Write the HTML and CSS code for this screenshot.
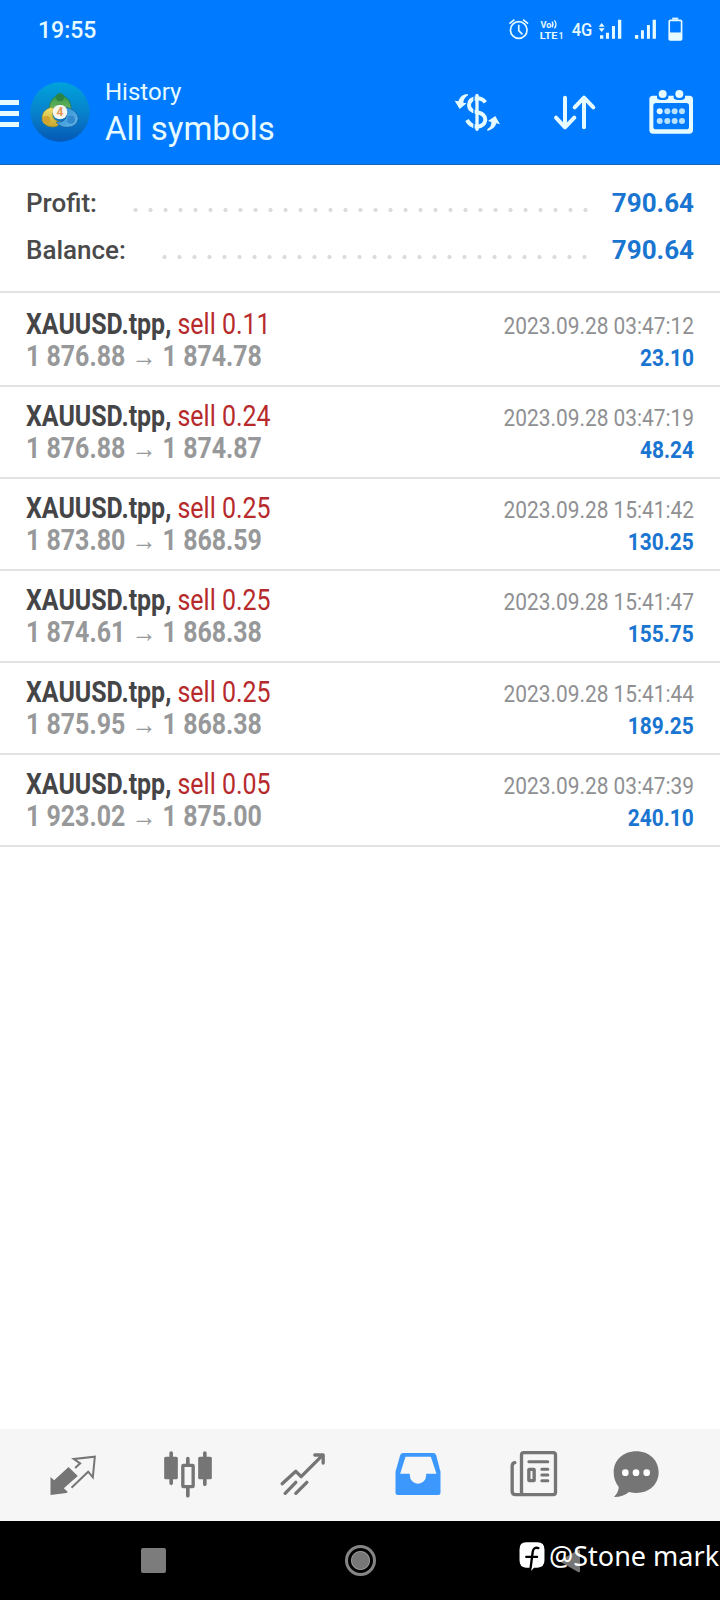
FILE: index.html
```html
<!DOCTYPE html>
<html lang="en">
<head>
<meta charset="utf-8">
<title>History</title>
<link rel="stylesheet" href="styles.css">
</head>
<body>
<div class="screen">
  <header class="header">
    <div class="status">
      <span class="clock">19:55</span>
      <svg class="status-icons" viewBox="180 40 570 100" fill="none" stroke="#e6fbff">
        <circle cx="236" cy="91" r="25" stroke-width="5"/>
        <path d="M236 75v18l11 11" stroke-width="5"/>
        <path d="M208 72l15-12M264 72l-15-12" stroke-width="5"/>
        <g fill="#e6fbff" stroke="none" font-family="Roboto, sans-serif">
          <text x="301" y="85" font-size="27" font-weight="700" textLength="33" lengthAdjust="spacingAndGlyphs">Vo</text>
          <text x="299" y="117" font-size="30" font-weight="700" textLength="53" lengthAdjust="spacingAndGlyphs">LTE</text>
          <text x="356" y="117" font-size="28" font-weight="700" textLength="14" lengthAdjust="spacingAndGlyphs">1</text>
          <text x="395" y="109" font-size="56" font-weight="500" textLength="62" lengthAdjust="spacingAndGlyphs">4G</text>
          <path d="M485 70l9 11h-18zM485 97l-9-11h18z"/>
          <path d="M480 107h10v10h-10zM498 99h9v18h-9zM516 79h9v38h-9zM534 60h10v57h-10z"/>
          <path d="M585 106h10v11h-10zM603 92h9v25h-9zM621 76h9v41h-9zM638 60h10v57h-10z"/>
        </g>
        <path d="M336 66q6 8 0 17M343 62q10 12 0 24" stroke-width="4"/>
        <rect x="688" y="62" width="37" height="59" rx="3" stroke-width="5"/>
        <path d="M697 57h18" stroke-width="6"/>
        <path d="M688 99h37v22h-37z" fill="#e6fbff"/>
      </svg>
    </div>
    <div class="toolbar">
      <div class="menu"><i></i><i></i><i></i></div>
      <svg class="logo" viewBox="0 0 180 180">
        <defs>
          <linearGradient id="disc" x1="0" y1="0" x2="0" y2="1"><stop offset="0" stop-color="#00a3dc"/><stop offset=".55" stop-color="#087fca"/><stop offset="1" stop-color="#0558b4"/></linearGradient>
          <linearGradient id="green" x1="0" y1="0" x2="0" y2="1"><stop offset="0" stop-color="#2f9a4c"/><stop offset="1" stop-color="#83bd62"/></linearGradient>
          <linearGradient id="gold" x1="0" y1="0" x2="0" y2="1"><stop offset="0" stop-color="#ece26c"/><stop offset="1" stop-color="#c9a52c"/></linearGradient>
          <linearGradient id="blue" x1="0" y1="0" x2="1" y2="1"><stop offset="0" stop-color="#2388cd"/><stop offset="1" stop-color="#68b8ea"/></linearGradient>
        </defs>
        <circle cx="90" cy="90" r="89" fill="url(#disc)"/>
        <path d="M58 82Q58 44 90 40q34 4 34 46l-16 8q-2-24-18-26-18 2-20 26z" fill="url(#green)" stroke="#1b6e45" stroke-width="2"/>
        <path d="M62 76q-26 10-26 32 4 26 32 27 18 0 24-16-22-2-24-20 0-12 8-18z" fill="url(#gold)" stroke="#8a8a2c" stroke-width="2"/>
        <path d="M110 76q32 8 35 34-4 24-34 26-22 0-32-16 26 2 30-18 4-14-6-22z" fill="url(#blue)" stroke="#14579c" stroke-width="2"/>
        <circle cx="90" cy="46" r="12" fill="#2d8346"/>
        <circle cx="49" cy="114" r="12" fill="#d3a32f"/>
        <circle cx="123" cy="113" r="12" fill="#3289ce"/>
        <circle cx="90" cy="90" r="22" fill="#f5f6ee"/>
        <text x="90" y="103" text-anchor="middle" font-family="Roboto, sans-serif" font-size="36" font-weight="700" fill="#e79554">4</text>
      </svg>
      <div class="titles">
        <div class="subtitle">History</div>
        <div class="title">All symbols</div>
      </div>
      <div class="actions">
        <svg viewBox="22 249 180 180" fill="none" stroke="#e6fbff">
          <path d="M137 307Q128 295 112 295 88 296 88 316 89 332 112 337 137 341 137 360 134 379 112 380 91 378 82 360" stroke-width="12"/>
          <path d="M98 285V390" stroke="#007aff" stroke-width="0"/>
          <path d="M112 286V388" stroke-width="10" stroke-linecap="round"/>
          <path d="M103 290V385" stroke="#007aff" stroke-width="4"/>
          <path d="M85 282Q63 282 56 304L45 302 60 327 81 310 71 308Q72 294 85 286zM143 393Q165 388 170 370L181 373 167 348 145 363 155 366Q156 381 143 387z" fill="#e6fbff" stroke="none"/>
        </svg>
        <svg viewBox="312 249 180 180" fill="none" stroke="#e6fbff" stroke-width="12" stroke-linecap="round" stroke-linejoin="round">
          <path d="M375 293V381M348 353L375 382 403 353M432 382V294M404 322L432 293 460 322"/>
        </svg>
        <svg viewBox="602 249 180 180" fill="#e6fbff">
          <rect x="627" y="287" width="131" height="114" rx="11"/>
          <rect x="639" y="309" width="107" height="79" rx="8" fill="#007aff"/>
          <path d="M650 285h34v9q-3 6-17 6t-17-6zM700 285h34v9q-3 6-17 6t-17-6z" fill="#007aff"/>
          <circle cx="667" cy="282" r="12"/><circle cx="717" cy="282" r="12"/>
          <circle cx="658" cy="334" r="9"/><g opacity=".8"><circle cx="681" cy="334" r="9"/><circle cx="703" cy="334" r="9"/><circle cx="725" cy="334" r="9"/>
          <circle cx="658" cy="363" r="9"/><circle cx="681" cy="363" r="9"/><circle cx="703" cy="363" r="9"/><circle cx="725" cy="363" r="9"/></g>
        </svg>
      </div>
    </div>
  </header>

  <section class="summary">
    <div class="sum-row"><span class="sum-label">Profit:</span><span class="dots dots-profit"></span><span class="sum-value">790.64</span></div>
    <div class="sum-row"><span class="sum-label">Balance:</span><span class="dots dots-balance"></span><span class="sum-value">790.64</span></div>
  </section>

  <main class="deals">
    <article class="deal">
      <div class="line"><span class="symbol">XAUUSD.tpp, <span class="side">sell 0.11</span></span><span class="date">2023.09.28 03:47:12</span></div>
      <div class="line"><span class="prices">1 876.88 <span class="arrow">→</span> 1 874.78</span><span class="gain">23.10</span></div>
    </article>
    <article class="deal">
      <div class="line"><span class="symbol">XAUUSD.tpp, <span class="side">sell 0.24</span></span><span class="date">2023.09.28 03:47:19</span></div>
      <div class="line"><span class="prices">1 876.88 <span class="arrow">→</span> 1 874.87</span><span class="gain">48.24</span></div>
    </article>
    <article class="deal">
      <div class="line"><span class="symbol">XAUUSD.tpp, <span class="side">sell 0.25</span></span><span class="date">2023.09.28 15:41:42</span></div>
      <div class="line"><span class="prices">1 873.80 <span class="arrow">→</span> 1 868.59</span><span class="gain">130.25</span></div>
    </article>
    <article class="deal">
      <div class="line"><span class="symbol">XAUUSD.tpp, <span class="side">sell 0.25</span></span><span class="date">2023.09.28 15:41:47</span></div>
      <div class="line"><span class="prices">1 874.61 <span class="arrow">→</span> 1 868.38</span><span class="gain">155.75</span></div>
    </article>
    <article class="deal">
      <div class="line"><span class="symbol">XAUUSD.tpp, <span class="side">sell 0.25</span></span><span class="date">2023.09.28 15:41:44</span></div>
      <div class="line"><span class="prices">1 875.95 <span class="arrow">→</span> 1 868.38</span><span class="gain">189.25</span></div>
    </article>
    <article class="deal">
      <div class="line"><span class="symbol">XAUUSD.tpp, <span class="side">sell 0.05</span></span><span class="date">2023.09.28 03:47:39</span></div>
      <div class="line"><span class="prices">1 923.02 <span class="arrow">→</span> 1 875.00</span><span class="gain">240.10</span></div>
    </article>
  </main>

  <nav class="tabs">
    <a class="tab"><svg viewBox="127.5 75 180 180">
      <path d="M150 171L161 181 204 141 232 168 190 205 202 216 198 219 150 225z" fill="#757575"/>
      <path d="M224 144L239 130 220 117 283 110 277 172 263 155 213 203" fill="none" stroke="#757575" stroke-width="6"/>
    </svg></a>
    <a class="tab"><svg viewBox="472.5 75 180 180" fill="#757575">
      <rect x="491" y="110" width="41" height="68" rx="5"/><rect x="593" y="110" width="41" height="68" rx="5"/>
      <path d="M512 99V190M613 99V193M562 116V136M562 200V227" stroke="#757575" stroke-width="11" stroke-linecap="round"/>
      <rect x="547" y="136" width="31" height="64" rx="2" fill="#f6f6f6" stroke="#757575" stroke-width="10"/>
    </svg></a>
    <a class="tab"><svg viewBox="817.5 75 180 180" fill="none" stroke="#757575" stroke-width="10" stroke-linecap="round" stroke-linejoin="round">
      <path d="M845 191L886 154 902 170 965 107M854 220L886 187M886 220L919 187"/>
      <path d="M943 105H968V129"/>
    </svg></a>
    <a class="tab"><svg viewBox="82.5 75 180 180">
      <path d="M128 99H218Q225 99 227 106L240 155V218Q240 225 233 225H112Q105 225 105 218V155L119 106Q121 99 128 99z" fill="#3c98fd"/>
      <path d="M135 110H211L228 161H197V166A24 25 0 0 1 148 166V161H119z" fill="#f6f6f6"/>
    </svg></a>
    <a class="tab"><svg viewBox="427.5 75 180 180" fill="none" stroke="#757575" stroke-width="10" stroke-linecap="round">
      <rect x="483" y="98" width="102" height="126" rx="7"/>
      <path d="M463 128Q455 129 455 139V214Q455 224 465 224H486"/>
      <path d="M505 125H562M544 148H562M544 165H562M544 182H562" stroke-width="9"/>
      <rect x="505" y="148" width="16" height="34" stroke-width="10" rx="1"/>
    </svg></a>
    <a class="tab tab-last"><svg viewBox="738 75 180 180">
      <path d="M829 94C868 94 896 121 896 157 896 193 868 219 829 219Q819 219 807 216 790 231 762 231 777 215 776 200 761 183 761 157C761 121 789 94 829 94z" fill="#757575"/>
      <circle cx="796" cy="158" r="10" fill="#fff"/><circle cx="828" cy="158" r="10" fill="#fff"/><circle cx="860" cy="158" r="10" fill="#fff"/>
    </svg></a>
  </nav>

  <footer class="sysnav">
    <span class="recent"></span>
    <span class="home"></span>
    <svg class="back" viewBox="0 0 24 26"><path d="M2 13L21 2q2-1 2 1V23q0 2-2 1z" fill="#757575"/></svg>
    <div class="watermark">
      <svg viewBox="0 0 76 86">
        <path d="M20 1H54Q75 1 75 22V54Q75 75 54 76H44L36 85V76H20Q1 75 1 54V22Q1 1 20 1z" fill="#fff"/>
        <path d="M57 18Q42 14 40 30L34 76M21 44H53" fill="none" stroke="#000" stroke-width="7" stroke-linecap="round"/>
      </svg>
      <span>@Stone mark</span>
    </div>
  </footer>
</div>
</body>
</html>
```
FILE: styles.css
```css
* { box-sizing: border-box; }
body { margin: 0; background: #fff; font-family: Roboto, "Liberation Sans", sans-serif; }
svg { display: block; }
.screen { width: 720px; height: 1600px; display: flex; flex-direction: column; overflow: hidden; }

.header { height: 165px; background: #007aff; border-bottom: 1px solid #1767b4; color: #e6fbff; }
.status { height: 60px; padding: 0 30px 0 38px; display: flex; justify-content: space-between; align-items: center; }
.clock { font-size: 23px; font-weight: 500; line-height: 30px; padding-top: 2px; }
.status-icons { width: 190px; height: 33.3px; }
.toolbar { height: 104px; display: flex; align-items: flex-start; }
.menu { width: 19px; margin-top: 40px; display: flex; flex-direction: column; gap: 6px; }
.menu i { height: 5px; background: #e6fbff; }
.logo { width: 60px; height: 60px; margin: 22px 0 0 11px; }
.titles { width: 200px; margin: 16px 0 0 15px; }
.subtitle { font-size: 24px; line-height: 32px; }
.title { font-size: 33px; line-height: 42px; white-space: nowrap; }
.actions { margin: 23px 0 0 auto; padding-right: 19.3px; display: flex; gap: 36.7px; }
.actions svg { width: 60px; height: 60px; }

.summary { height: 128px; border-bottom: 2px solid #e2e2e2; padding: 15px 26px 0; }
.sum-row { height: 47px; display: flex; align-items: center; font-size: 26px; line-height: 47px; font-weight: 500; }
.sum-label { color: #4a4a4a; }
.sum-value { color: #1a75d1; font-weight: 700; margin-left: auto; }
.dots { height: 6px; margin-top: 12px; background: radial-gradient(circle at center, #dcdcdc 1.7px, transparent 2.5px) 0 0 / 15px 6px repeat-x; }
.dots-profit { width: 465px; margin-left: 31px; }
.dots-balance { width: 435px; margin-left: 31px; }

.deals { flex: 1; }
.deal { height: 92px; padding: 13px 26px 0; border-bottom: 2px solid #e2e2e2; }
.deal:first-child { height: 94px; padding-top: 15px; }
.line { height: 32px; line-height: 32px; display: flex; justify-content: space-between; align-items: baseline; white-space: nowrap; }
.symbol, .prices { font-size: 29px; font-weight: 700; transform: scaleX(.86); transform-origin: left; }
.symbol { color: #454547; }
.side { color: #b72a2c; font-weight: 400; }
.prices { color: #979899; }
.date, .gain { font-size: 24px; transform: scaleX(.87); transform-origin: right; }
.date { color: #8f9092; }
.gain { color: #1a75d1; font-weight: 700; }

.tabs { height: 92px; background: #f6f6f6; padding-left: 15px; display: flex; align-items: center; }
.tab { width: 115px; display: flex; justify-content: center; }
.tab-last { width: 92px; }
.tab svg { width: 60px; height: 60px; }

.sysnav { height: 79px; background: #000; position: relative; display: flex; align-items: center; padding-left: 141px; }
.recent { width: 25px; height: 25px; border-radius: 2px; background: #7c7c7c; }
.home { width: 31px; height: 31px; margin-left: 178.5px; border: 3px solid #858585; border-radius: 50%; background: radial-gradient(circle, #777 8px, #999 9px, #000 10px); }
.back { width: 24px; height: 26px; margin-left: 181px; }
.watermark { position: absolute; left: 519px; top: 19px; display: flex; align-items: center; gap: 4px; color: #fff; font-family: "Noto Sans", sans-serif; font-size: 27px; line-height: 32px; white-space: nowrap; }
.watermark svg { width: 26px; height: 29px; }
```
